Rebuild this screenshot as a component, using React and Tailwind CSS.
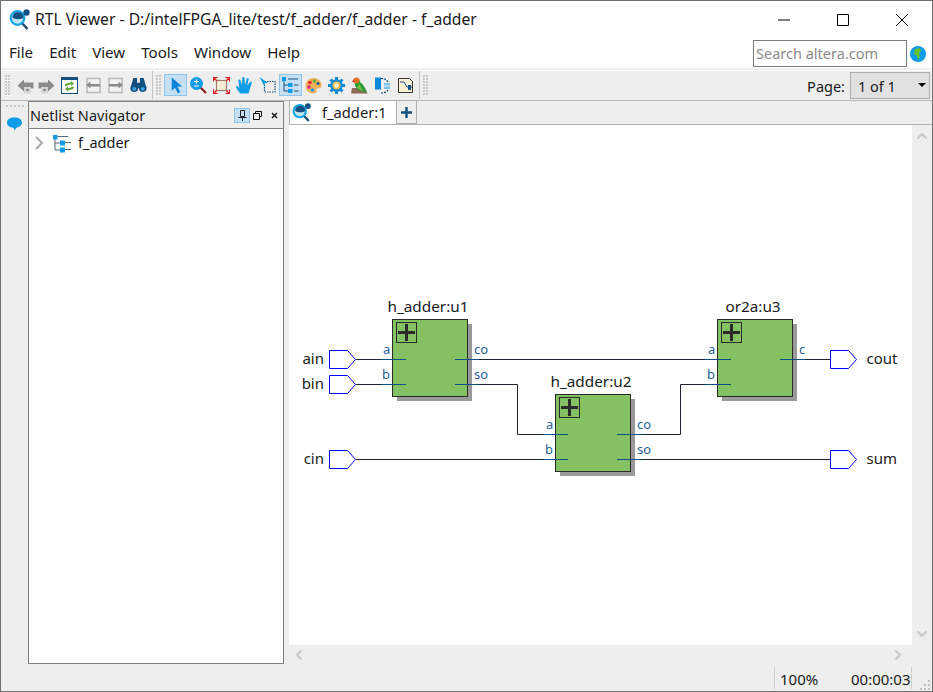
import React from "react";
import { FiChevronRight, FiChevronLeft, FiChevronUp, FiChevronDown } from "react-icons/fi";

const FONT = "font-['Noto_Sans','Open_Sans',sans-serif]";

// Little magnifier with the dark blob, used in the title bar and on the tab
function ViewerIcon({ className }) {
  return (
    <svg viewBox="0 0 22 22" className={className}>
      <line x1="12" y1="14" x2="18.500" y2="21" stroke="#1a4a6a" strokeWidth="2.400" />
      <circle cx="8.500" cy="10" r="6.800" fill="#bfe6f7" stroke="#12a3e6" strokeWidth="2.200" />
      <path d="M3.500 9.500a5.500 5.500 0 0 1 11 0c-1 2-9 2.500-11 0z" fill="#14507f" />
      <circle cx="17.500" cy="4.500" r="3.200" fill="#14507f" />
    </svg>
  );
}

function Grip({ className = "" }) {
  return (
    <div className={`grid grid-cols-2 gap-[1px] w-[5px] content-center shrink-0 ${className}`}>
      {Array.from({ length: 14 }).map((_, i) => (
        <span key={i} className="w-[2px] h-[2px] bg-[#c8c8c8]" />
      ))}
    </div>
  );
}

function ArrowBox({ flip }) {
  return (
    <svg viewBox="0 0 17 17" className={`w-[17px] h-[17px] ${flip ? "-scale-x-100" : ""}`}>
      <path d="M0.500 8.500L7 2.500v3h9.500v6H7v3z" fill="#8c8c8c" />
      <rect x="7" y="10" width="7" height="6.500" fill="#d2d2d2" />
      <rect x="9.500" y="12" width="2" height="2" fill="#777" />
    </svg>
  );
}

function NavBox({ flip }) {
  return (
    <svg viewBox="0 0 17 17" className={`w-[17px] h-[17px] ${flip ? "-scale-x-100" : ""}`}>
      <path d="M2 1.500h13v14H2z" fill="#f4f4f4" stroke="#b9b9b9" strokeWidth="1.500" />
      <path d="M1 8l4.500-3.500v2.500H15v2.500H5.500v2z" fill="#8c8c8c" />
    </svg>
  );
}

const ToolIcons = {
  refresh: (
    <svg viewBox="0 0 17 17" className="w-[17px] h-[17px]">
      <rect x="0.500" y="0.500" width="16" height="16" fill="#fff" stroke="#14507f" />
      <rect x="0" y="0" width="17" height="3" fill="#14507f" />
      <path d="M4 9c0-2 2-3.500 6-3.500V4l3 2.500L10 9V7.500c-2 0-3 .5-4 1.500z" fill="#5fa83a" />
      <path d="M13 10c0 2-2 3-6 3v1.500l-3-2.500 3-2.500V11c2 0 3-.5 4-1.500z" fill="#5fa83a" />
    </svg>
  ),
  binoculars: (
    <svg viewBox="0 0 17 17" className="w-[17px] h-[16px]">
      <path d="M3 1h4v5h3V1h4l3 11H0z" fill="#14507f" />
      <circle cx="4" cy="12" r="4" fill="#14507f" />
      <circle cx="13" cy="12" r="4" fill="#14507f" />
      <circle cx="4" cy="12.500" r="2" fill="#37a7e6" />
      <circle cx="13" cy="12.500" r="2" fill="#37a7e6" />
    </svg>
  ),
  select: (
    <svg viewBox="0 0 17 17" className="w-[16px] h-[17px]">
      <path d="M4 0l11 9.500h-5l3 6-2.500 1.500-3-6L4 14z" fill="#0c82d8" />
    </svg>
  ),
  zoom: (
    <svg viewBox="0 0 17 17" className="w-[17px] h-[17px]">
      <line x1="10" y1="10" x2="16" y2="16" stroke="#8a1f1f" strokeWidth="2.200" />
      <circle cx="6.500" cy="6.500" r="6.500" fill="#0f9ce8" />
      <path d="M4 4.500h5M6.500 2.500v4M4 9h5" stroke="#fff" strokeWidth="1.200" />
    </svg>
  ),
  fit: (
    <svg viewBox="0 0 17 17" className="w-[17px] h-[17px]">
      <rect x="3.500" y="3.500" width="10" height="10" fill="#f7eed6" stroke="#9a7f70" strokeWidth="1.200" />
      <path d="M0.500 4.500V.5h4M0.500 .5l3.500 3.500M12.500 .5h4v4M16.500 .5l-3.500 3.500M0.500 12.500v4h4M0.500 16.500l3.500-3.500M16.500 12.500v4h-4M16.500 16.500l-3.500-3.500" fill="none" stroke="#e0262c" strokeWidth="1.300" />
    </svg>
  ),
  hand: (
    <svg viewBox="0 0 17 17" className="w-[17px] h-[17px]">
      <path d="M4 16.500C3 14 0 12 0 9.500c1-1 2.300 0 3.300 1.500L2.300 3.500c0-1.200 1.800-1.200 2.200 0L6 8l.3-7c0-1.200 2-1.200 2.200 0L9 8l1.800-6.500c.4-1.100 2.200-.6 1.900.6L11.300 8.500l2.700-3.500c.8-.9 2.300 0 1.700 1.100L12.500 16.500z" fill="#0f9ce8" />
    </svg>
  ),
  region: (
    <svg viewBox="0 0 17 17" className="w-[17px] h-[17px]">
      <rect x="5.500" y="4.500" width="10.500" height="10.500" fill="none" stroke="#14507f" strokeWidth="1.200" strokeDasharray="1.500 1" />
      <path d="M0.500 0l8.500 6H5.500l.5 4.500z" fill="#0f9ce8" />
    </svg>
  ),
  hierarchy: (
    <svg viewBox="0 0 17 17" className="w-[17px] h-[17px]">
      <path d="M2 2v12M2 8h4M2 14h4" stroke="#14507f" fill="none" />
      <rect x="0" y="0" width="4" height="4" fill="#0f9ce8" />
      <rect x="6" y="6" width="4.500" height="4" fill="#0f9ce8" />
      <rect x="6" y="12" width="4.500" height="4" fill="#0f9ce8" />
      <path d="M6 2h10M12 8h4.500M12 14h4.500" stroke="#14507f" />
    </svg>
  ),
  palette: (
    <svg viewBox="0 0 17 17" className="w-[17px] h-[17px]">
      <path d="M8.500 1C13 1 16.500 4 16.500 8c0 3-2 3.500-4 3.500-1.500 0-1.500 1.500-1 2.500.3 1.500-1 2.500-3 2.500C4 16.500.5 13 .5 8.500S4 1 8.500 1z" fill="#f0b35c" />
      <circle cx="5" cy="5.500" r="1.800" fill="#e0262c" />
      <circle cx="9.500" cy="4" r="1.700" fill="#5fa83a" />
      <circle cx="4" cy="10" r="1.800" fill="#e0268c" />
      <circle cx="7.500" cy="13" r="1.700" fill="#0f9ce8" />
      <circle cx="13" cy="6.500" r="1.500" fill="#14507f" />
    </svg>
  ),
  gear: (
    <svg viewBox="0 0 17 17" className="w-[17px] h-[17px]">
      <path d="M8.500 0v17M0 8.500h17M2.500 2.500l12 12M14.500 2.500l-12 12" stroke="#0f8ad8" strokeWidth="3" />
      <circle cx="8.500" cy="8.500" r="6.300" fill="#0f8ad8" />
      <circle cx="8.500" cy="8.500" r="4" fill="#f1b84a" />
      <circle cx="8.500" cy="8.500" r="2.300" fill="#f4f4f4" />
    </svg>
  ),
  bird: (
    <svg viewBox="0 0 17 17" className="w-[17px] h-[17px]">
      <path d="M0 16.500h17L11 11H1z" fill="#8a6a55" />
      <path d="M3 3c2-3 6-2 6 2 3 2 6 7 7 10-5 0-11-2-12-7z" fill="#2f9a3a" />
      <path d="M8 7l4 7-6-3z" fill="#7cc242" />
      <circle cx="5.500" cy="3.500" r="3" fill="#e8701e" />
      <path d="M3 2L1 4.500l2.500 1z" fill="#e0262c" />
    </svg>
  ),
  chip: (
    <svg viewBox="0 0 17 17" className="w-[17px] h-[17px]">
      <path d="M1 0.500h6v12H1z" fill="#0f8ad8" />
      <path d="M7 1.500c4 0 6 1.500 7 4" fill="none" stroke="#14507f" strokeWidth="1.200" strokeDasharray="2 1" />
      <path d="M7 16c3 0 6-1 7-3" fill="none" stroke="#14507f" strokeWidth="1.200" strokeDasharray="2 1" />
      <rect x="10" y="6" width="6" height="2.500" fill="#7cc3ea" />
      <rect x="10" y="9.500" width="6" height="2.500" fill="#7cc3ea" />
    </svg>
  ),
  sheet: (
    <svg viewBox="0 0 17 17" className="w-[17px] h-[17px]">
      <path d="M1.500 1.500h11l3 3v11h-14z" fill="#f7eed6" stroke="#333" />
      <path d="M3 5h4l3 5h5" fill="none" stroke="#14507f" />
      <rect x="11" y="8" width="3" height="5" fill="#14507f" />
    </svg>
  ),
};

const TOOLS = ["select", "zoom", "fit", "hand", "region", "hierarchy", "palette", "gear", "bird", "chip", "sheet"];

function PinPort({ x, y, label, output }) {
  return (
    <g>
      <path d={`M${x} ${y - 9}h18l8 9-8 9h-18z`} fill="#fff" stroke="#0000ff" />
      <text
        x={output ? x + 36 : x - 5.5}
        y={y + 4}
        textAnchor={output ? "start" : "end"}
        fontSize="15"
        fill="#1a1a1a"
      >
        {label}
      </text>
    </g>
  );
}

function Block({ x, y, title, titleX }) {
  return (
    <g>
      <rect x={x + 4.5} y={y + 4.5} width="75" height="77" fill="#999999" />
      <rect x={x} y={y} width="75" height="77" fill="#84c162" stroke="#2a2a2a" />
      <rect x={x + 4} y={y + 3} width="20" height="20" fill="none" stroke="#2a2a2a" />
      <path d={`M${x + 5.5} ${y + 13}h17M${x + 14} ${y + 4.5}v17`} stroke="#2a2a2a" strokeWidth="3" />
      <text x={titleX} y={y - 8} fontSize="15.300" fill="#1a1a1a" textAnchor="middle">
        {title}
      </text>
    </g>
  );
}

function PortLabel({ x, y, children }) {
  return (
    <text x={x} y={y} fontSize="13" fill="#1f5f9a">
      {children}
    </text>
  );
}

function Stub({ x1, x2, y }) {
  return <line x1={x1} x2={x2} y1={y} y2={y} stroke="#0b5080" />;
}

function Schematic() {
  return (
    <svg viewBox="289 125 623 520" className={`block w-full h-full ${FONT}`}>
      <g fill="none" stroke="#1c2430">
        <path d="M355.500 359.500H406" />
        <path d="M355.500 384.500H406" />
        <path d="M355.500 459.500H568" />
        <path d="M455 359.500H731" />
        <path d="M455 384.500H517.500V434.500H568" />
        <path d="M617 434.500H680.500V384.500H731" />
        <path d="M617 459.500H830.500" />
        <path d="M780 359.500H830.500" />
      </g>
      <PinPort x={329.5} y={359.5} label="ain" />
      <PinPort x={329.5} y={384.5} label="bin" />
      <PinPort x={329.5} y={459.5} label="cin" />
      <PinPort x={830.5} y={359.5} label="cout" output />
      <PinPort x={830.5} y={459.5} label="sum" output />

      <Block x={392.5} y={319.5} title="h_adder:u1" titleX={428} />
      <Block x={555.5} y={394.5} title="h_adder:u2" titleX={591} />
      <Block x={717.5} y={319.5} title="or2a:u3" titleX={753} />

      <Stub x1={381} x2={406} y={359.5} />
      <Stub x1={381} x2={406} y={384.5} />
      <Stub x1={455} x2={479} y={359.5} />
      <Stub x1={455} x2={479} y={384.5} />
      <Stub x1={543} x2={568} y={434.5} />
      <Stub x1={543} x2={568} y={459.5} />
      <Stub x1={617} x2={642} y={434.5} />
      <Stub x1={617} x2={642} y={459.5} />
      <Stub x1={705} x2={731} y={359.5} />
      <Stub x1={705} x2={731} y={384.5} />
      <Stub x1={780} x2={805} y={359.5} />

      <PortLabel x={383} y={354}>a</PortLabel>
      <PortLabel x={382} y={379}>b</PortLabel>
      <PortLabel x={474} y={354}>co</PortLabel>
      <PortLabel x={474} y={379}>so</PortLabel>
      <PortLabel x={546} y={429}>a</PortLabel>
      <PortLabel x={545} y={454}>b</PortLabel>
      <PortLabel x={637} y={429}>co</PortLabel>
      <PortLabel x={637} y={454}>so</PortLabel>
      <PortLabel x={708} y={354}>a</PortLabel>
      <PortLabel x={707} y={379}>b</PortLabel>
      <PortLabel x={799} y={354}>c</PortLabel>
    </svg>
  );
}

export default function App() {
  return (
    <div className={`w-[933px] h-[692px] flex flex-col bg-[#eeeeee] border border-[#707070] overflow-hidden text-[#1a1a1a] ${FONT}`}>
      {/* Title bar */}
      <div className="h-[37px] bg-white flex items-center shrink-0">
        <ViewerIcon className="w-[22px] h-[22px] ml-[8px] mb-[1px]" />
        <span className="ml-[4px] text-[15.7px] whitespace-nowrap">RTL Viewer - D:/intelFPGA_lite/test/f_adder/f_adder - f_adder</span>
        <div className="ml-auto flex items-center text-black">
          <svg viewBox="0 0 12 12" className="w-[12px] h-[12px] mr-[47px]"><path d="M0 6h12" stroke="#000" /></svg>
          <svg viewBox="0 0 12 12" className="w-[12px] h-[12px] mr-[47px]"><path d="M.5.5h11v11H.5z" fill="none" stroke="#000" /></svg>
          <svg viewBox="0 0 12 12" className="w-[12px] h-[12px] mr-[24px]"><path d="M0 0l12 12M12 0L0 12" stroke="#000" /></svg>
        </div>
      </div>

      {/* Menu bar */}
      <div className="h-[30px] bg-white flex items-center shrink-0 text-[15.1px]">
        <div className="flex gap-[16px] pl-[8px] pb-[2px]">
          <span>File</span>
          <span>Edit</span>
          <span>View</span>
          <span>Tools</span>
          <span>Window</span>
          <span>Help</span>
        </div>
        <div className="ml-auto flex items-center gap-[3px] mr-[6px] mt-[1px]">
          <div className="w-[154px] h-[27px] bg-white border border-[#7a7a7a] flex items-center pl-[2px] pt-[1px] text-[14.5px] text-[#8a8a8a]">Search altera.com</div>
          <svg viewBox="0 0 16 16" className="w-[16px] h-[16px]">
            <circle cx="8" cy="8" r="8" fill="#0f9ce8" />
            <path d="M5 3l5-1 1 3-2 2 1 3-2 4-1-4-3-2z" fill="#66c22e" />
          </svg>
        </div>
      </div>

      {/* Toolbar */}
      <div className="h-[31px] mt-[2px] pb-[1px] flex items-center shrink-0 bg-[#eeeeee] border-b border-[#b8b8b8] border-t border-t-white">
        <Grip className="ml-[4px]" />
        <div className="flex items-center ml-[5px]">
          <div className="w-[21px] flex justify-center"><ArrowBox /></div>
          <div className="w-[21px] flex justify-center"><ArrowBox flip /></div>
          <div className="w-[24px] flex justify-center">{ToolIcons.refresh}</div>
          <div className="w-[24px] flex justify-center"><NavBox /></div>
          <div className="w-[21px] flex justify-center"><NavBox flip /></div>
          <div className="w-[24px] flex justify-center">{ToolIcons.binoculars}</div>
        </div>
        <div className="w-[1px] h-[28px] bg-[#c4c4c4] ml-[2px]" />
        <Grip className="ml-[3px]" />
        <div className="flex items-center ml-[3px]">
          {TOOLS.map((name) => {
            const on = name === "select" || name === "hierarchy";
            return (
              <div key={name} className={`w-[23px] h-[22px] flex items-center justify-center ${on ? "bg-[#c5dff5] border border-[#8fc3ea]" : ""}`}>
                {ToolIcons[name]}
              </div>
            );
          })}
        </div>
        <div className="w-[1px] h-[28px] bg-[#c4c4c4] ml-[2px]" />
        <Grip className="ml-[3px]" />
        <span className="ml-auto text-[14.5px] mr-[5px] pt-[3px]">Page:</span>
        <div className="w-[80px] h-[27px] bg-[#e1e1e1] border border-[#adadad] flex items-center pl-[7px] pt-[3px] text-[14.5px] mr-[2px]">
          1 of 1
          <span className="ml-auto mr-[3px] mb-[3px] w-0 h-0 border-x-[4px] border-x-transparent border-t-[4px] border-t-black" />
        </div>
      </div>

      {/* Main area */}
      <div className="flex-1 flex min-h-0">
        <div className="w-[27px] shrink-0 flex flex-col items-center">
          <div className="flex gap-[2px] mt-[4px]">
            {Array.from({ length: 5 }).map((_, i) => (
              <span key={i} className="w-[2px] h-[2px] bg-[#c8c8c8]" />
            ))}
          </div>
          <svg viewBox="0 0 16 14" className="w-[15px] h-[14px] mt-[10px]">
            <path d="M8 0c4.500 0 8 2 8 5.500S12 11 10 11l-2 3-1-3C3 11 0 9 0 5.500S3.500 0 8 0z" fill="#0f9ce8" />
          </svg>
        </div>

        {/* Netlist navigator */}
        <div className="w-[256px] shrink-0 flex flex-col border border-[#7f7f7f]">
          <div className="h-[27px] flex items-center border-b border-[#7f7f7f] shrink-0">
            <span className="ml-[1px] pt-[1px] text-[14.5px]">Netlist Navigator</span>
            <div className="ml-auto flex items-center">
              <div className="w-[16px] h-[15px] bg-[#c5dff5] border border-[#8fc3ea] flex items-center justify-center">
                <svg viewBox="0 0 9 11" className="w-[9px] h-[11px]"><path d="M2.500.5h4v6h-4zM.5 7.500h8M4.500 7.500V11" fill="none" stroke="#222" /></svg>
              </div>
              <svg viewBox="0 0 9 9" className="w-[9px] h-[9px] ml-[3px]"><path d="M2.500 2.500V.5h6v5h-2M.5 2.500h6v6h-6z" fill="none" stroke="#111" /></svg>
              <svg viewBox="0 0 7 7" className="w-[7px] h-[7px] ml-[9px] mr-[5px]"><path d="M1 1l5 5M6 1L1 6" stroke="#111" strokeWidth="1.400" /></svg>
            </div>
          </div>
          <div className="flex-1 bg-white flex items-start pt-[3px] text-[14.5px]">
            <svg viewBox="0 0 8 14" className="w-[8px] h-[14px] mt-[4px] ml-[6px]">
              <path d="M1 1l6 6-6 6" fill="none" stroke="#aaaaaa" strokeWidth="2" />
            </svg>
            <svg viewBox="0 0 19 18" className="w-[19px] h-[18px] ml-[10px] mt-[3px]">
              <path d="M2 4v11M2 8h5M2 15h5" stroke="#556677" fill="none" />
              <rect x="0" y="0" width="4.500" height="4.500" fill="#0f9ce8" />
              <rect x="7" y="5.500" width="5" height="5" fill="#0f9ce8" />
              <rect x="7" y="12.500" width="5" height="5" fill="#0f9ce8" />
              <path d="M4.500 1.500H15M12 7.500h6M12 14.500h6" stroke="#556677" />
            </svg>
            <span className="ml-[6px]">f_adder</span>
          </div>
        </div>

        {/* Schematic area */}
        <div className="ml-[5px] flex-1 flex flex-col min-w-0">
          <div className="h-[24px] flex items-end shrink-0 border-b border-[#b0b0b0]">
            <div className="w-[108px] h-[24px] bg-white border border-b-0 border-[#b0b0b0] flex items-center">
              <ViewerIcon className="w-[20px] h-[20px] ml-[2px] mb-[2px]" />
              <span className="ml-[10px] text-[14.7px]">f_adder:1</span>
            </div>
            <div className="w-[20px] h-[24px] border border-[#b0b0b0] border-l-0 flex items-center justify-center">
              <svg viewBox="0 0 11 11" className="w-[11px] h-[11px]"><path d="M5.500 0v11M0 5.500h11" stroke="#14507f" strokeWidth="2.400" /></svg>
            </div>
          </div>
          <div className="flex-1 flex min-h-0">
            <div className="flex-1 bg-white min-w-0">
              <Schematic />
            </div>
            <div className="w-[20px] flex flex-col items-center justify-between py-[3px] text-[#c8c8c8]">
              <FiChevronUp strokeWidth={3} className="w-[16px] h-[16px]" />
              <FiChevronDown strokeWidth={3} className="w-[16px] h-[16px]" />
            </div>
          </div>
          <div className="h-[19px] shrink-0 flex items-center justify-between pl-[2px] pr-[26px] text-[#c8c8c8]">
            <FiChevronLeft strokeWidth={3} className="w-[16px] h-[16px]" />
            <FiChevronRight strokeWidth={3} className="w-[16px] h-[16px]" />
          </div>
        </div>
      </div>

      {/* Status bar */}
      <div className="h-[27px] shrink-0 flex items-center justify-end text-[15px]">
        <div className="w-[1px] h-[22px] bg-[#d0d0d0]" />
        <span className="ml-[5px] w-[71px] pt-[3px]">100%</span>
        <span className="w-[60px] pt-[3px] whitespace-nowrap">00:00:03</span>
        <div className="w-[1px] h-[22px] bg-[#d0d0d0]" />
        <div className="w-[20px] h-full flex items-end justify-end pr-[2px] pb-[1px]">
          <svg viewBox="0 0 10 10" className="w-[10px] h-[10px]">
            <path d="M8 0h2v2H8zM4 4h2v2H4zM8 4h2v2H8zM0 8h2v2H0zM4 8h2v2H4zM8 8h2v2H8z" fill="#c0c0c0" />
          </svg>
        </div>
      </div>
    </div>
  );
}
